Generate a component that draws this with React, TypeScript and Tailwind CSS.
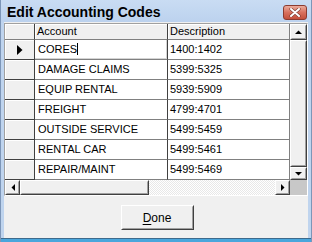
import React from "react";

const rows = [
  ["CORES", "1400:1402"],
  ["DAMAGE CLAIMS", "5399:5325"],
  ["EQUIP RENTAL", "5939:5909"],
  ["FREIGHT", "4799:4701"],
  ["OUTSIDE SERVICE", "5499:5459"],
  ["RENTAL CAR", "5499:5461"],
  ["REPAIR/MAINT", "5499:5469"],
];

const dither =
  "bg-[repeating-conic-gradient(#e8e8e8_0_25%,#ffffff_0_50%)] bg-[length:2px_2px]";

function Btn3D({ children, className = "" }: { children?: React.ReactNode; className?: string }) {
  return (
    <div className={`border border-t-white border-l-white border-r-[#404040] border-b-[#404040] bg-[#f0f0f0] ${className}`}>
      <div className="w-full h-full border border-t-[#f0f0f0] border-l-[#f0f0f0] border-r-[#a0a0a0] border-b-[#a0a0a0] flex items-center justify-center">
        {children}
      </div>
    </div>
  );
}

function Tri({ dir }: { dir: "up" | "down" | "left" | "right" }) {
  const pts: Record<string, string> = {
    up: "0,4 7,4 3.5,0.5",
    down: "0,0 7,0 3.5,3.5",
    left: "4,0 4,7 0.5,3.5",
    right: "0,0 0,7 3.5,3.5",
  };
  const w = dir === "up" || dir === "down" ? 7 : 4;
  const h = dir === "up" || dir === "down" ? 4 : 7;
  return (
    <svg width={w} height={h} viewBox={`0 0 ${w} ${h}`}>
      <polygon points={pts[dir]} fill="#000" />
    </svg>
  );
}

export default function App() {
  return (
    <div
      className="w-[312px] h-[242px] flex flex-col bg-[#bfd4ee] border-l border-r border-[#7d96b8] overflow-hidden"
      style={{ fontFamily: "'Liberation Sans', Arial, sans-serif" }}
    >
      {/* Title bar */}
      <div className="h-[22px] flex items-center pl-[6px] pr-[4px] bg-[linear-gradient(#c9dcf3,#bcd2ee)]">
        <span className="text-[14px] font-bold text-black leading-none flex-1 pt-[1px]">
          Edit Accounting Codes
        </span>
        <div className="w-[24px] h-[15px] rounded-[3px] border border-[#8b3b30] bg-[linear-gradient(#ebab9c,#d8705d_50%,#c4503c)] flex items-center justify-center mt-[2px]">
          <svg width="12" height="9" viewBox="0 0 12 9">
            <path d="M2 1 L10 8 M10 1 L2 8" stroke="#7a3a30" strokeWidth="3.2" strokeLinecap="round" />
            <path d="M2 1 L10 8 M10 1 L2 8" stroke="#ffffff" strokeWidth="2" strokeLinecap="round" />
          </svg>
        </div>
      </div>

      {/* Body */}
      <div className="flex-1 flex flex-col bg-[#f0f0f0] mx-[3px]">
        {/* Grid */}
        <div className="mt-[1px] border border-t-[#a0a0a0] border-l-[#a0a0a0] border-r-white border-b-white flex flex-col text-[11px] text-black">
          <div className="flex">
            <div className="flex flex-col">
              {/* header */}
              <div className="flex h-[16px]">
                <div className="w-[30px] border-r border-b border-r-[#404040] border-b-[#808080] bg-[#f0f0f0] shadow-[inset_1px_1px_0_#fff]" />
                <div className="w-[133px] border-r border-b border-r-[#404040] border-b-[#808080] bg-[#f0f0f0] shadow-[inset_1px_1px_0_#fff] pl-[2px] leading-[15px]">
                  Account
                </div>
                <div className="w-[122px] border-r border-b border-r-[#808080] border-b-[#808080] bg-[#f0f0f0] shadow-[inset_1px_1px_0_#fff] pl-[2px] leading-[15px]">
                  Description
                </div>
              </div>
              {rows.map((r, i) => (
                <div key={i} className="flex h-[20px]">
                  <div className="w-[30px] border-r border-b border-r-[#404040] border-b-[#404040] bg-[#f0f0f0] shadow-[inset_1px_1px_0_#fff] flex items-center justify-center pl-[1px]">
                    {i === 0 && (
                      <svg width="6" height="10" viewBox="0 0 6 10">
                        <polygon points="0,0 0,10 5.5,5" fill="#000" />
                      </svg>
                    )}
                  </div>
                  <div className="w-[133px] border-r border-b border-r-[#404040] border-b-[#808080] bg-white">
                    {i === 0 ? (
                      <div className="h-full border-r border-b border-[#d4d4d4] pl-[3px] pt-[2px] leading-[14px] flex">
                        <span>CORES</span>
                        <span className="w-px h-[12px] bg-black mt-[1px]" />
                      </div>
                    ) : (
                      <div className="pl-[3px] pt-[2px] leading-[14px]">{r[0]}</div>
                    )}
                  </div>
                  <div className="w-[122px] border-r border-b border-r-[#808080] border-b-[#808080] bg-white pl-[2px] pt-[2px] leading-[14px]">
                    {r[1]}
                  </div>
                </div>
              ))}
            </div>
            {/* vertical scrollbar */}
            <div className={`w-[17px] flex flex-col ${dither}`}>
              <Btn3D className="h-[16px]">
                <Tri dir="up" />
              </Btn3D>
              <Btn3D className="flex-1" />
              <Btn3D className="h-[13px]">
                <Tri dir="down" />
              </Btn3D>
            </div>
          </div>
          {/* horizontal scrollbar */}
          <div className="flex h-[15px]">
            <div className={`w-[286px] flex ${dither}`}>
              <Btn3D className="w-[15px]">
                <Tri dir="left" />
              </Btn3D>
              <Btn3D className="w-[129px]" />
              <div className="flex-1" />
              <Btn3D className="w-[15px]">
                <Tri dir="right" />
              </Btn3D>
            </div>
            <div className="w-[17px] bg-[#c8c8c8]" />
          </div>
        </div>

        {/* Button area */}
        <div className="flex-1 flex justify-center pt-[9px] pl-[2px]">
          <div className="w-[73px] h-[25px] border border-t-white border-l-white border-r-[#404040] border-b-[#404040]">
            <div className="w-full h-full border border-t-[#f0f0f0] border-l-[#f0f0f0] border-r-[#a0a0a0] border-b-[#a0a0a0] flex items-center justify-center text-[12px] text-black">
              <span>
                <span className="underline underline-offset-2">D</span>one
              </span>
            </div>
          </div>
        </div>
      </div>
      <div className="h-[4px] bg-[linear-gradient(#3d6a8c_0_1px,#4aa6dc_1px)]" />
    </div>
  );
}
